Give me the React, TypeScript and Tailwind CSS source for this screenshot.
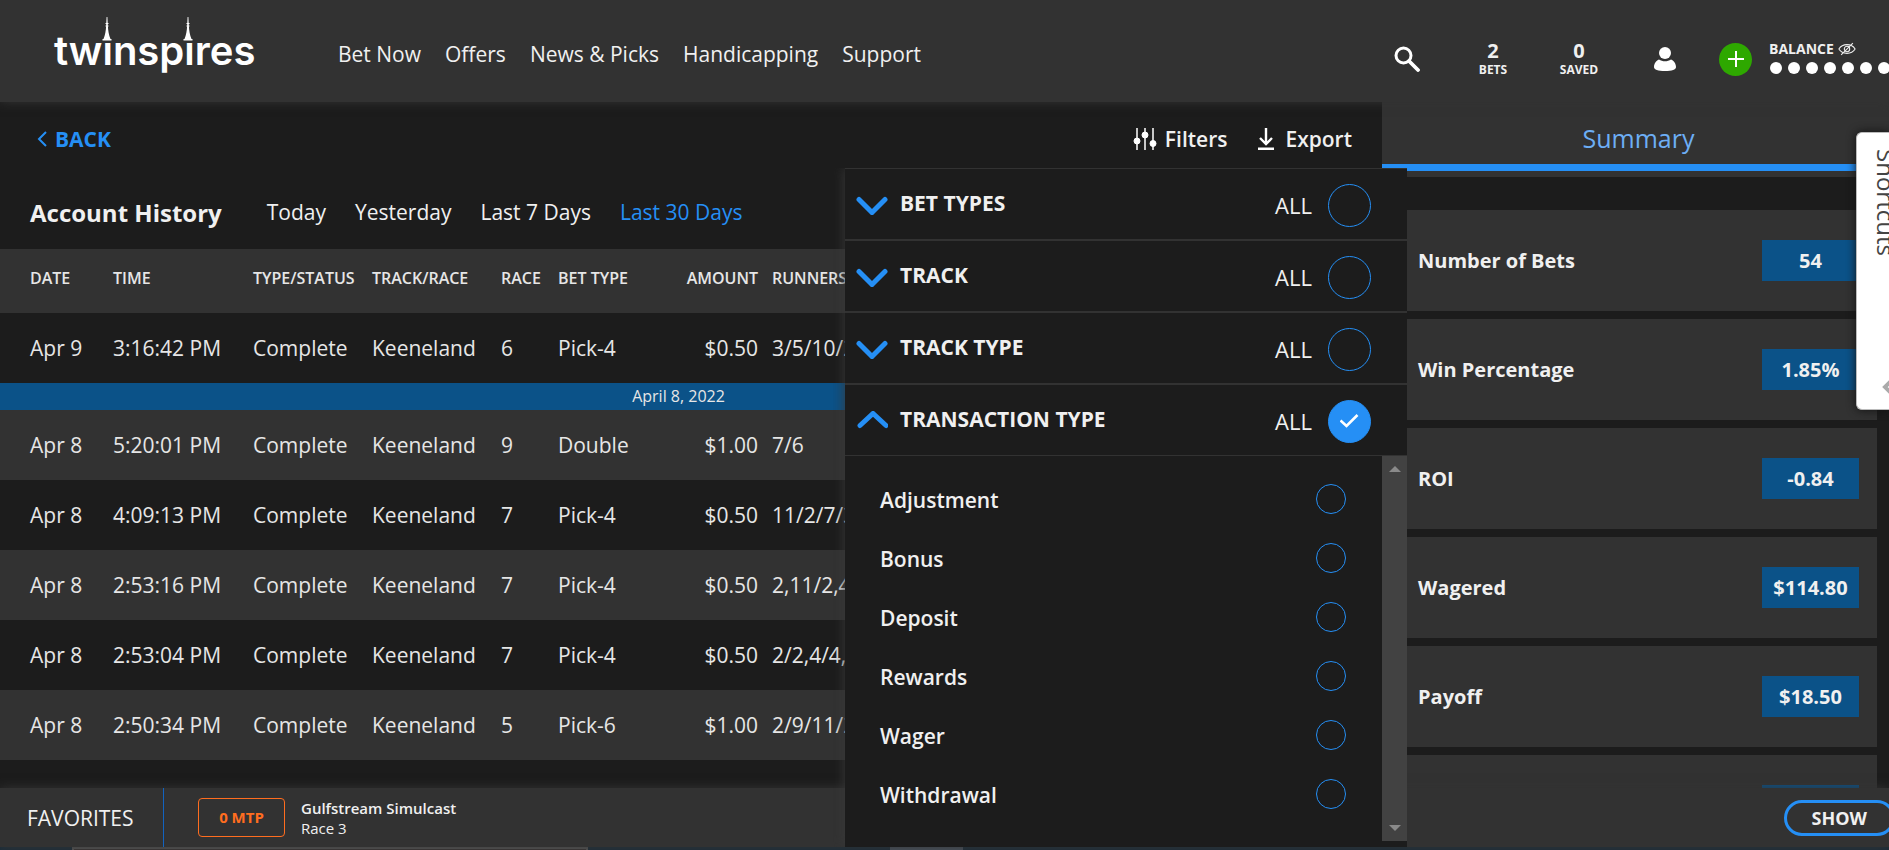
import { useState } from "react";

const navLinks = ["Bet Now", "Offers", "News & Picks", "Handicapping", "Support"];
const ranges = ["Today", "Yesterday", "Last 7 Days", "Last 30 Days"];

const bets = [
  { date: "Apr 9", time: "3:16:42 PM", status: "Complete", track: "Keeneland", race: 6, type: "Pick-4", amount: "$0.50", runners: "3/5/10/2,6" },
  { day: "April 8, 2022" },
  { date: "Apr 8", time: "5:20:01 PM", status: "Complete", track: "Keeneland", race: 9, type: "Double", amount: "$1.00", runners: "7/6" },
  { date: "Apr 8", time: "4:09:13 PM", status: "Complete", track: "Keeneland", race: 7, type: "Pick-4", amount: "$0.50", runners: "11/2/7/3,5" },
  { date: "Apr 8", time: "2:53:16 PM", status: "Complete", track: "Keeneland", race: 7, type: "Pick-4", amount: "$0.50", runners: "2,11/2,4/7" },
  { date: "Apr 8", time: "2:53:04 PM", status: "Complete", track: "Keeneland", race: 7, type: "Pick-4", amount: "$0.50", runners: "2/2,4/4,7/1" },
  { date: "Apr 8", time: "2:50:34 PM", status: "Complete", track: "Keeneland", race: 5, type: "Pick-6", amount: "$1.00", runners: "2/9/11/2/4" },
];

const stats = [
  ["Number of Bets", "54"],
  ["Win Percentage", "1.85%"],
  ["ROI", "-0.84"],
  ["Wagered", "$114.80"],
  ["Payoff", "$18.50"],
  ["", ""],
];

const filterGroups = ["BET TYPES", "TRACK", "TRACK TYPE", "TRANSACTION TYPE"];
const transactionTypes = ["Adjustment", "Bonus", "Deposit", "Rewards", "Wager", "Withdrawal"];

function Spire({ className }: { className: string }) {
  return (
    <svg viewBox="0 0 10 24" className={className} fill="#fff" aria-hidden="true">
      <path d="M4.6 0h.8l.3 6h.8v1h-.7v1.500h.7v1h-.6c.2 4 .9 8.500 2.600 12.500H9.500v1.500H.5V22h1C3.200 18 3.900 13.500 4.100 9.500h-.6v-1h.7V7h-.7V6h.8z" />
    </svg>
  );
}

function Logo() {
  return (
    <a href="#" aria-label="twinspires" className="relative block w-[200px] text-white">
      <span className="font-['Inter','Liberation_Sans',sans-serif] text-[40px] leading-[60px] font-semibold">twınspıres</span>
      <Spire className="absolute -top-1 left-12 h-6 w-[10px]" />
      <Spire className="absolute -top-1 left-[129px] h-6 w-[10px]" />
    </a>
  );
}

function Header() {
  return (
    <header className="relative z-10 flex h-[102px] shrink-0 items-center bg-[#323232] pl-[54px] shadow-[0_0_10px_#333]">
      <Logo />
      <nav className="ml-[84px] flex gap-6 pt-1.5 text-[21px] leading-8">
        {navLinks.map((link) => (
          <a key={link} href="#" className="whitespace-nowrap">{link}</a>
        ))}
      </nav>

      <div className="ml-auto flex shrink-0 items-center pt-4">
        <button type="button" aria-label="Search" className="mr-[47px]">
          <svg viewBox="0 0 26 26" className="h-[26px] w-[26px]" fill="none" stroke="#fff">
            <circle cx="9.500" cy="9.500" r="7.500" strokeWidth="3" />
            <path d="M15 15l9 9" strokeWidth="3.800" strokeLinecap="round" />
          </svg>
        </button>
        <button type="button" className="flex w-[52px] flex-col items-center font-bold">
          <span className="text-xl leading-[22px]">2</span>
          <span className="text-xs leading-4">BETS</span>
        </button>
        <button type="button" className="ml-[34px] flex w-[52px] flex-col items-center font-bold">
          <span className="text-xl leading-[22px]">0</span>
          <span className="text-xs leading-4">SAVED</span>
        </button>
        <button type="button" aria-label="Account" className="ml-12">
          <svg viewBox="0 0 24 26" className="h-[26px] w-6" fill="#fff">
            <circle cx="12" cy="7" r="6" />
            <path d="M6 13.500c3.500 2.400 8.500 2.400 12 0 3 1 5 4.500 5 7.500 0 2.800-4 4-11 4S1 23.800 1 21c0-3 2-6.500 5-7.500z" />
          </svg>
        </button>
        <button type="button" aria-label="Deposit" className="ml-[42px] flex h-[33px] w-[33px] items-center justify-center rounded-full bg-[#2ea800]">
          <svg viewBox="0 0 16 16" className="h-4 w-4" stroke="#fff" strokeWidth="2">
            <path d="M8 0v16M0 8h16" />
          </svg>
        </button>
        <div className="ml-[17px] w-[120px] overflow-hidden pb-1.5">
          <div className="flex items-center gap-1">
            <span className="text-sm leading-5 font-bold">BALANCE</span>
            <svg viewBox="0 0 20 14" className="h-[14px] w-[18px]" fill="none" stroke="#eee" strokeWidth="1.200">
              <path d="M1 7c4-6.500 14-6.500 18 0-4 6.500-14 6.500-18 0z" />
              <circle cx="10" cy="7" r="3" />
              <path d="M3.500 13.500l13-13" />
            </svg>
          </div>
          <div className="mt-[3px] flex gap-1.5 pl-px">
            {[...Array(7)].map((_, i) => (
              <span key={i} className="h-3 w-3 shrink-0 rounded-full bg-white" />
            ))}
          </div>
        </div>
      </div>
    </header>
  );
}

function HistoryTable() {
  return (
    <div className="pr-[25px]">
      <table className="w-full table-fixed text-left text-[21px] whitespace-nowrap text-[#e6e6e6]">
        <colgroup>
          <col className="w-[113px]" />
          <col className="w-[140px]" />
          <col className="w-[119px]" />
          <col className="w-[129px]" />
          <col className="w-[57px]" />
          <col className="w-[100px]" />
          <col className="w-[100px]" />
          <col />
        </colgroup>
        <thead>
          <tr className="h-16 bg-[#323232] text-base [&>th]:p-0 [&>th]:pb-1.5 [&>th]:font-semibold">
            <th><span className="pl-[30px]">DATE</span></th>
            <th>TIME</th>
            <th>TYPE/STATUS</th>
            <th>TRACK/RACE</th>
            <th>RACE</th>
            <th>BET TYPE</th>
            <th className="text-right">AMOUNT</th>
            <th><span className="pl-3.5">RUNNERS</span></th>
          </tr>
        </thead>
        <tbody>
          {bets.map((bet, i) =>
            bet.day ? (
              <tr key={i} className="h-[27px] bg-[#0b5288]">
                <td colSpan={8} className="p-0 text-center text-base leading-[27px]">{bet.day}</td>
              </tr>
            ) : (
              <tr key={i} className={`h-[70px] [&>td]:p-0 [&>td]:pt-0.5 ${i > 0 && i % 2 === 0 ? "bg-[#323232]" : "bg-[#1c1c1c]"}`}>
                <td><span className="pl-[30px]">{bet.date}</span></td>
                <td>{bet.time}</td>
                <td>{bet.status}</td>
                <td>{bet.track}</td>
                <td>{bet.race}</td>
                <td>{bet.type}</td>
                <td className="text-right">{bet.amount}</td>
                <td><span className="pl-3.5">{bet.runners}</span></td>
              </tr>
            )
          )}
        </tbody>
      </table>
    </div>
  );
}

function History() {
  const [range, setRange] = useState("Last 30 Days");
  return (
    <section className="min-w-0 flex-1 overflow-hidden">
      {/* Toolbar */}
      <div className="flex h-[74px] items-center pr-[30px] pl-[37px] text-[21px] leading-8">
        <a href="#" className="flex items-center gap-2 font-bold text-[#258ff5]">
          <svg viewBox="0 0 10 16" className="h-4 w-[10px]" fill="none" stroke="currentColor" strokeWidth="2">
            <path d="M9 1L2 8l7 7" />
          </svg>
          BACK
        </a>
        <button type="button" className="ml-auto flex items-center gap-2 font-semibold">
          <svg viewBox="0 0 24 22" className="h-[22px] w-6" fill="#fff" stroke="#fff">
            <path d="M4 0v22M12 0v22M20 0v22" strokeWidth="1.500" />
            <circle cx="4" cy="13" r="3" />
            <circle cx="12" cy="7" r="3" />
            <circle cx="20" cy="15.500" r="3" />
          </svg>
          Filters
        </button>
        <button type="button" className="ml-[30px] flex items-center gap-2.5 font-semibold">
          <svg viewBox="0 0 18 22" className="h-[22px] w-[18px]" fill="none" stroke="#fff" strokeWidth="2.400">
            <path d="M9 0v15M3 10l6 6 6-6M1 20.800h16" />
          </svg>
          Export
        </button>
      </div>

      {/* Title and date ranges */}
      <div className="flex h-[73px] items-center pl-[30px]">
        <h1 className="mr-[45px] text-2xl font-bold whitespace-nowrap">Account History</h1>
        <div className="flex gap-[29px] pb-0.5 text-[21px] leading-8">
          {ranges.map((item) => (
            <button
              key={item}
              type="button"
              onClick={() => setRange(item)}
              className={item === range ? "whitespace-nowrap text-[#258ff5]" : "whitespace-nowrap"}
            >
              {item}
            </button>
          ))}
        </div>
      </div>

      <HistoryTable />
    </section>
  );
}

function Summary() {
  return (
    <aside className="w-[507px] shrink-0 overflow-hidden">
      <div className="border-b-[6px] border-[#323232]">
        <h2 className="border-b-[7px] border-[#258ff5] bg-[#323232] pt-5 pb-2.5 pl-1.5 text-center text-[25px] leading-8 text-[#6daef5]">
          Summary
        </h2>
      </div>
      <dl className="mt-[33px] mr-3 ml-3 flex flex-col gap-2">
        {stats.map(([label, value]) => (
          <div key={label} className="flex h-[101px] shrink-0 items-center justify-between bg-[#323232] pr-[18px] pl-6 font-bold">
            <dt className="text-xl">{label}</dt>
            <dd className="h-[41px] w-[97px] bg-[#0b5288] text-center text-xl leading-[41px]">{value}</dd>
          </div>
        ))}
      </dl>
    </aside>
  );
}

function FilterPanel() {
  const [all, setAll] = useState<string[]>(["TRANSACTION TYPE"]);
  const toggle = (name: string) =>
    setAll(all.includes(name) ? all.filter((n) => n !== name) : [...all, name]);

  return (
    <div className="absolute top-[66px] right-[482px] bottom-0 z-20 flex w-[562px] flex-col bg-[#1c1c1c] shadow-[0_0_12px_#3a3a3a] [clip-path:inset(0_0_0_-12px)]">
      {filterGroups.map((name) => (
        <div key={name} className="flex h-[72px] shrink-0 items-center border-y border-[#323232] pr-9 pl-[11px]">
          <button type="button" className="flex items-center gap-3 pb-0.5 text-[21px] leading-8 font-bold">
            <svg viewBox="0 0 32 20" className="mt-1 h-5 w-8" fill="none" stroke="#258ff5" strokeWidth="5" strokeLinecap="round">
              <path d={name === "TRANSACTION TYPE" ? "M4 14.500L17 2.500l13 12" : "M3 4.500l13 13 13-13"} />
            </svg>
            {name}
          </button>
          <label className="ml-auto flex items-center gap-4 pt-0.5 text-[22px]">
            ALL
            <span className="relative flex h-[43px] w-[43px] items-center justify-center">
              <input
                type="checkbox"
                checked={all.includes(name)}
                onChange={() => toggle(name)}
                className="h-[43px] w-[43px] appearance-none rounded-full border border-[#258ff5] checked:bg-[#258ff5]"
              />
              {all.includes(name) && (
                <svg viewBox="0 0 20 14" className="pointer-events-none absolute h-[14px] w-5" fill="none" stroke="#fff" strokeWidth="2.600">
                  <path d="M.5 6.500l6 5.500 11-11" />
                </svg>
              )}
            </span>
          </label>
        </div>
      ))}

      <div className="mb-1.5 flex min-h-0 flex-1">
        <ul className="flex-1 overflow-hidden pt-[15px] pr-9 pl-[35px]">
          {transactionTypes.map((type) => (
            <li key={type}>
              <label className="flex h-[59px] items-center justify-between text-[21px] font-semibold">
                {type}
                <input type="checkbox" className="mb-1 h-[30px] w-[30px] appearance-none rounded-full border border-[#258ff5] checked:bg-[#258ff5]" />
              </label>
            </li>
          ))}
        </ul>
        <div className="flex w-[25px] flex-col items-center justify-between bg-[#424242] py-2.5" aria-hidden="true">
          <svg viewBox="0 0 12 6" className="h-1.5 w-3" fill="#8a8a8a"><path d="M0 6l6-6 6 6z" /></svg>
          <svg viewBox="0 0 12 6" className="h-1.5 w-3" fill="#8a8a8a"><path d="M0 0l6 6 6-6z" /></svg>
        </div>
      </div>
    </div>
  );
}

function Favorites() {
  return (
    <footer className="relative z-10 flex h-[59px] shrink-0 items-center overflow-hidden bg-[#323232] pl-[27px] shadow-[0_0_10px_#333]">
      <h2 className="w-[136px] pt-0.5 text-[21px] font-medium">FAVORITES</h2>
      <div className="self-stretch border-l border-[#1263c0]" />
      <a href="#" className="ml-[34px] flex items-center gap-4">
        <span className="w-[87px] rounded border border-[#ff6d1f] text-center text-[15px] leading-[37px] font-bold text-[#ff6d1f]">
          0 MTP
        </span>
        <span className="flex flex-col text-[15px] leading-5">
          <span className="font-semibold">Gulfstream Simulcast</span>
          <span>Race 3</span>
        </span>
      </a>
      <button type="button" className="-mr-1.5 ml-auto rounded-full border-[3px] border-[#258ff5] px-[25px] text-lg leading-[30px] font-bold">
        SHOW
      </button>
    </footer>
  );
}

function Shortcuts() {
  return (
    <button
      type="button"
      className="absolute top-[30px] right-0 z-30 flex h-[278px] w-[33px] flex-col items-start justify-between overflow-hidden rounded-l-md border border-r-0 border-[#bbb] bg-white pt-4 pb-3.5 pl-[13px] text-[#444] shadow-[0_0_10px_#111]"
    >
      <span className="text-2xl leading-8 [writing-mode:vertical-rl]">Shortcuts</span>
      <svg viewBox="0 0 14 16" className="ml-3 h-4 w-[14px] shrink-0" fill="none" stroke="#aaa" strokeWidth="4">
        <path d="M10 1L3 8l7 7" />
      </svg>
    </button>
  );
}

export default function App() {
  return (
    <div className="flex h-screen flex-col overflow-hidden bg-[#1c1c1c] font-['Open_Sans','Noto_Sans',sans-serif] text-[#f0f0f0]">
      <Header />
      <div className="relative flex min-h-0 flex-1 flex-col">
        <main className="flex min-h-0 flex-1">
          <History />
          <Summary />
        </main>
        <Favorites />
        <FilterPanel />
        <Shortcuts />
      </div>
      {/* Bottom edge strip */}
      <div className="flex h-[3px] shrink-0 bg-[#1b2d3a]">
        <div className="ml-[72px] w-[516px] border-2 border-b-0 border-[#5a5a5a] bg-[#3a3636]" />
        <div className="ml-[302px] w-[73px] bg-[#4b5560]" />
      </div>
    </div>
  );
}
